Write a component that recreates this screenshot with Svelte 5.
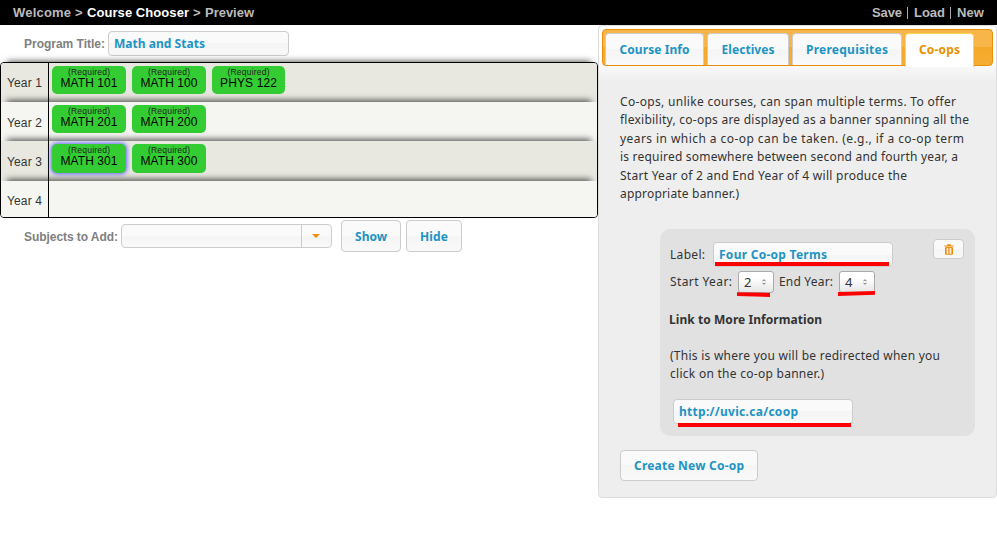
<script>
  // Spreads the letters of a label so that it fills its column width.
  function fit(node, width) {
    const natural = node.getBoundingClientRect().width;
    const gaps = Math.max(1, node.textContent.length - 1);
    const spacing = (width - natural) / gaps;
    node.style.letterSpacing = `${spacing}px`;
    node.style.marginRight = `${-spacing}px`;
  }

  const years = [
    { name: 'Year 1', courses: ['MATH 101', 'MATH 100', 'PHYS 122'] },
    { name: 'Year 2', courses: ['MATH 201', 'MATH 200'] },
    { name: 'Year 3', courses: ['MATH 301', 'MATH 300'] },
    { name: 'Year 4', courses: [] }
  ];
  const selected = 'MATH 301';

  const tabs = [
    { name: 'Course Info', width: 70 },
    { name: 'Electives', width: 53 },
    { name: 'Prerequisites', width: 82 },
    { name: 'Co-ops', width: 41 }
  ];
  const activeTab = 'Co-ops';

  const intro = [
    ['Co-ops, unlike courses, can span multiple terms. To offer', 336],
    ['flexibility, co-ops are displayed as a banner spanning all the', 349],
    ['years in which a co-op can be taken. (e.g., if a co-op term', 344],
    ['is required somewhere between second and fourth year, a', 338],
    ['Start Year of 2 and End Year of 4 will produce the', 287],
    ['appropriate banner.)', 119]
  ];
  const linkHelp = [
    ['(This is where you will be redirected when you', 270],
    ['click on the co-op banner.)', 154]
  ];
</script>

{#snippet yearSelect(value)}
  <div class="select">
    {value}
    <svg width="4" height="6" viewBox="0 0 4 6"><path d="M.5 2.2 2 .7l1.5 1.5M.5 3.8 2 5.3l1.5-1.5" fill="none" stroke="#555" stroke-width=".9" /></svg>
  </div>
{/snippet}

<div class="app">
  <header>
    <nav>
      <span use:fit={58}>Welcome</span><i>&gt;</i><b use:fit={102}>Course Chooser</b><i>&gt;</i><span use:fit={49}>Preview</span>
    </nav>
    <nav class="actions">
      <span use:fit={30}>Save</span><em></em><span use:fit={31}>Load</span><em></em><span use:fit={27}>New</span>
    </nav>
  </header>

  <div class="columns">
    <main>
      <div class="title-row">
        <label for="title"><span use:fit={81}>Program Title:</span></label>
        <div class="field title" id="title"><span use:fit={91}>Math and Stats</span></div>
      </div>

      <div class="plan">
        {#each years as year}
          <section>
            <h3><span use:fit={35}>{year.name}</span></h3>
            <div class="courses">
              {#each year.courses as course}
                <div class="course" class:selected={course === selected}>
                  <small><span use:fit={42}>(Required)</span></small>
                  <strong><span use:fit={57}>{course}</span></strong>
                </div>
              {/each}
            </div>
          </section>
        {/each}
      </div>

      <div class="subject-row">
        <label for="subjects"><span use:fit={94}>Subjects to Add:</span></label>
        <div class="combo" id="subjects"><div class="value"></div><div class="toggle"><i></i></div></div>
        <div class="button show"><span use:fit={32}>Show</span></div>
        <div class="button hide"><span use:fit={28}>Hide</span></div>
      </div>
    </main>

    <aside>
      <div class="tabs">
        {#each tabs as tab}
          <div class="tab" class:active={tab.name === activeTab}><span use:fit={tab.width}>{tab.name}</span></div>
        {/each}
      </div>

      <div class="intro">
        {#each intro as [line, width]}
          <div><span use:fit={width}>{line}</span></div>
        {/each}
      </div>

      <div class="card">
        <div class="label-row">
          <div class="caption"><span use:fit={35}>Label:</span></div>
          <div class="field marked"><span use:fit={108}>Four Co-op Terms</span><svg class="mark one" width="174" height="4"><path d="M0 0h174v4H0z" /></svg></div>
          <div class="trash">
            <svg width="10" height="11" viewBox="0 0 10 11"><path d="M.3 2h9.4M3.2 .8h3.6" fill="none" stroke="#ef8c08" stroke-width="1.2" /><path d="M1.5 3.6h7v6.6h-7z" fill="#f6b055" stroke="#ef8c08" /><path d="M3.5 4v6M6.5 4v6" stroke="#fff" stroke-width=".8" /></svg>
          </div>
        </div>
        <div class="year-row">
          <div><span use:fit={62}>Start Year:</span></div>
          <div class="marked">{@render yearSelect(2)}<svg class="mark two" width="34" height="5"><path d="M0 .2 33 1v4L0 4z" /></svg></div>
          <div><span use:fit={54}>End Year:</span></div>
          <div class="marked">{@render yearSelect(4)}<svg class="mark three" width="37" height="5"><path d="M0 1 37 0v3.8L0 5z" /></svg></div>
        </div>
        <h4><span use:fit={153}>Link to More Information</span></h4>
        <div class="help">
          {#each linkHelp as [line, width]}
            <div><span use:fit={width}>{line}</span></div>
          {/each}
        </div>
        <div class="field link marked"><span use:fit={119}>http://uvic.ca/coop</span><svg class="mark four" width="173" height="4"><path d="M0 0h173v4H0z" /></svg></div>
      </div>

      <div class="button create"><span use:fit={110}>Create New Co-op</span></div>
    </aside>
  </div>
</div>

<style>
  :global(body) { background: #fff; }
  .app { width: 997px; height: 539px; overflow: hidden; font-family: "Liberation Sans", Arial, sans-serif; }
  .app * { box-sizing: border-box; }
  span { display: inline-block; white-space: nowrap; }
  svg { display: block; }

  header { height: 25px; background: #000; color: #bbb; display: flex; justify-content: space-between; padding: 0 13px; font: bold 13px/25px "Liberation Sans", Arial, sans-serif; }
  nav { display: flex; }
  nav b { color: #fff; white-space: nowrap; }
  nav i { font-style: normal; width: 8px; margin: 0 4px; }
  nav em { width: 1px; height: 12px; background: #aaa; margin: 7px 6px 0 5px; }

  .columns { display: flex; align-items: flex-start; }
  main { width: 598px; }
  label { font: bold 12px "Liberation Sans", Arial, sans-serif; color: #808080; }

  .title-row { display: flex; align-items: center; height: 37px; padding-left: 24px; }
  .title-row label { width: 84px; }
  .field, .button, .combo, .trash { border: 1px solid #ccc; border-radius: 4px; background: linear-gradient(#fafafa 50%, #f5f5f5 50%, #f9f9f9); }
  .field, .button, .tab { font: bold 12px "Noto Sans", "Open Sans", sans-serif; color: #1c94c4; }
  .field { width: 180px; height: 25px; line-height: 23px; padding-left: 5px; }
  .field.title { width: 181px; }

  .plan { width: 598px; height: 156px; border: 1px solid #000; border-radius: 4px; display: grid; grid-template-rows: 39px 39px 40px 36px; }
  section { display: flex; background: #f5f6f1; box-shadow: 0 -8px 6px -6px rgba(0, 0, 0, .62); }
  section:nth-child(odd) { background: #e8e8e0; }
  section:first-child { border-radius: 3px 3px 0 0; }
  section:last-child { border-radius: 0 0 3px 3px; }
  h3 { margin: 0; width: 48px; border-right: 1px solid #000; padding-left: 6px; font-weight: normal; font-size: 12px; line-height: 41px; color: #333; }
  section:nth-child(2) h3, section:nth-child(3) h3 { line-height: 43px; }
  .courses { display: flex; gap: 6px; padding: 3px; }
  .course { width: 74px; height: 28px; border-radius: 5px; background: #3c3; text-align: center; padding-top: 1px; }
  section:nth-child(3) .course { height: 29px; }
  .course:nth-child(3) { width: 73px; }
  .course.selected { box-shadow: 0 0 4px 1px #66f; }
  small { display: block; font-size: 8.5px; line-height: 10px; color: #222; }
  strong { display: block; font-weight: normal; font-size: 12px; line-height: 13px; color: #000; }

  .subject-row { display: flex; align-items: center; height: 36px; padding-left: 24px; }
  .subject-row label { width: 97px; padding-top: 1px; }
  .combo { width: 211px; height: 24px; display: flex; margin-right: 9px; }
  .value { width: 180px; border-right: 1px solid #ccc; }
  .toggle { flex: 1; display: flex; align-items: center; padding-left: 10px; }
  .toggle i { border: 4px solid transparent; border-top-color: #ef8c08; border-bottom: 0; }
  .button { display: flex; align-items: center; justify-content: center; height: 32px; }
  .show { width: 60px; margin-right: 5px; }
  .hide { width: 56px; }

  aside { width: 399px; height: 473px; border: 1px solid #ddd; border-radius: 4px; padding: 3px; background: linear-gradient(#fff 0, #fff 30px, #eee 56px); font: 12px "Noto Sans", "Open Sans", sans-serif; color: #333; }
  .tabs { height: 37px; border: 1px solid #e78f08; border-radius: 4px; background: linear-gradient(#f7b54a 50%, #f6a828 50%, #f5ad34); display: flex; gap: 3px; padding: 3px 2px 0; }
  .tab { width: 99px; height: 32px; border: 1px solid #ccc; border-bottom: 0; border-radius: 4px 4px 0 0; background: linear-gradient(#fafafa 50%, #f5f5f5 50%, #f9f9f9); text-align: center; line-height: 31px; }
  .tab:nth-child(2) { width: 82px; }
  .tab:nth-child(3) { width: 110px; }
  .tab.active { width: 69px; height: 34px; background: #fff; border-color: #fbd850; color: #eb8f00; }
  .intro { margin: 27px 0 0 18px; line-height: 18.4px; }
  .intro div { height: 18.4px; }

  .card { width: 315px; height: 207px; margin: 26px 0 0 58px; border-radius: 10px; background: #e1e1e1; padding: 10px; }
  .label-row { display: flex; align-items: flex-start; height: 32px; }
  .caption { width: 43px; line-height: 31px; }
  .label-row .field { margin-top: 3px; }
  .trash { width: 31px; height: 20px; margin-left: 40px; display: flex; justify-content: center; align-items: center; }
  .marked { position: relative; }
  .mark { position: absolute; fill: #f00; }
  .one { left: 1px; top: 19px; }
  .two { left: -1px; top: 21px; }
  .three { left: -1px; top: 20px; }
  .four { left: 4px; top: 23px; }
  .year-row { display: grid; grid-template-columns: 68px 41px 60px 36px; line-height: 21px; }
  .select { display: flex; align-items: center; justify-content: space-between; width: 36px; height: 22px; border: 1px solid #aaa; border-radius: 3px; padding: 0 7px 0 5px; background: linear-gradient(#fff 30%, #e6e6e6); font-size: 13px; line-height: 20px; }
  h4 { margin: 17px 0 0 -1px; font-size: 12px; line-height: 20px; }
  .help { margin-top: 17px; line-height: 18.4px; }
  .help div { height: 18px; }
  .field.link { margin: 16px 0 0 3px; }
  .create { width: 138px; height: 31px; margin: 14px 0 0 18px; }
</style>
